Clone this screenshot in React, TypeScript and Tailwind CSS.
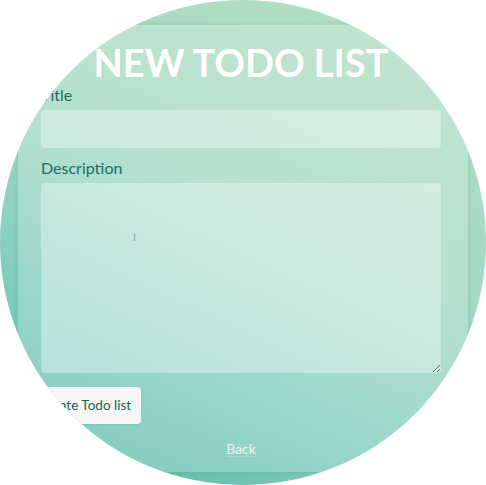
import React from 'react';

export default function App() {
  return (
    <div className="w-[486px] h-[485px] bg-white">
      <div
        className="w-[486px] h-[485px] rounded-full overflow-hidden bg-[linear-gradient(205deg,#b6e0c0_0%,#a3d9c4_45%,#7ccbbd_75%,#5bb5a8_100%)] pt-[25px] px-[18px]"
        style={{ fontFamily: 'Lato, "Open Sans", sans-serif' }}
      >
        {/* Form panel */}
        <div className="h-[447px] bg-white/20 shadow-[0_0_6px_rgba(0,80,60,0.15)] pl-[23px] pr-[27px] flex flex-col">
          <h1 className="mt-[13px] text-[38px] leading-[48px] font-bold text-white text-center">
            NEW TODO LIST
          </h1>

          <label className="mt-0 text-[16px] leading-[18px] text-[#1c6d60]">Title</label>
          <input
            type="text"
            className="mt-[6px] h-[38px] w-full rounded-[4px] bg-white/35 outline-none"
          />

          <label className="mt-[11px] text-[16px] leading-[18px] text-[#1c6d60]">Description</label>
          <div className="relative mt-[6px]">
            <textarea className="block h-[190px] w-full rounded-[4px] bg-white/35 outline-none resize-y" />
            <span className="absolute left-[92px] top-[49px] text-[10px] leading-none text-[#8a9a96]">I</span>
          </div>

          <div className="mt-[14px]">
            <button className="ml-[-14px] h-[37px] pl-[12px] pr-[10px] rounded-[4px] bg-[#f5f7f6] text-[13.5px] text-[#1f5c53] shadow-[0_1px_2px_rgba(0,0,0,0.08)]">
              Create Todo list
            </button>
          </div>

          <div className="mt-[12px] text-center">
            <a className="text-[14px] leading-[18px] text-[#eef4f2] underline decoration-white/20 underline-offset-2">
              Back
            </a>
          </div>
        </div>
      </div>
    </div>
  );
}
